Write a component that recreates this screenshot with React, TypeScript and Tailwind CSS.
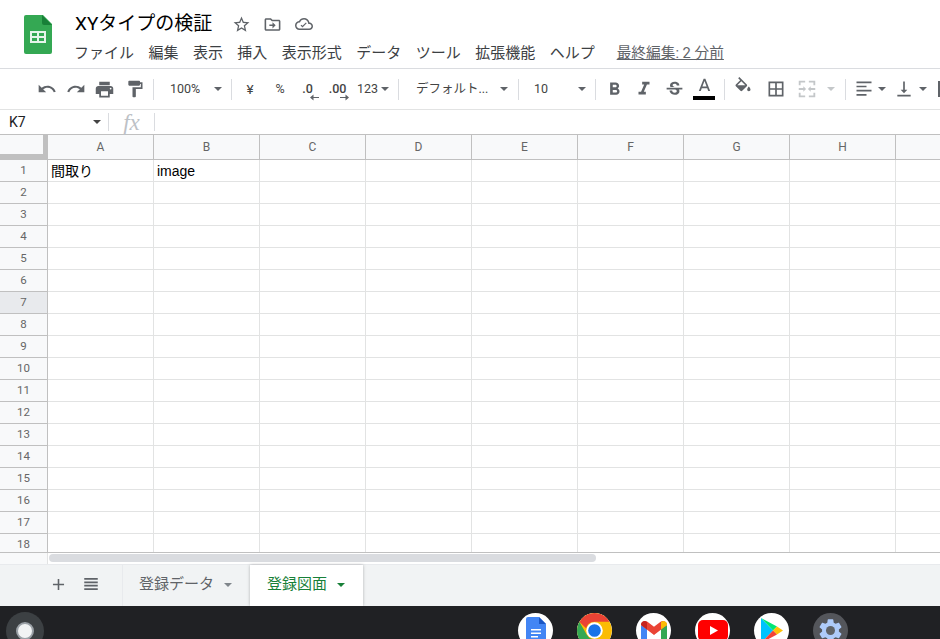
import React from 'react';

const FONT = "font-['Roboto','Noto_Sans_CJK_JP',sans-serif]";

const Icon: React.FC<{ d: string; size?: number; className?: string }> = ({ d, size = 18, className = 'text-[#5f6368]' }) => (
    <svg width={size} height={size} viewBox="0 0 24 24" fill="currentColor" fillRule="evenodd" className={className}>
        <path d={d} />
    </svg>
);

const Caret: React.FC<{ className?: string }> = ({ className = 'border-t-[#5f6368]' }) => (
    <span className={`inline-block shrink-0 w-0 h-0 border-x-[4px] border-x-transparent border-t-[4px] ${className}`} />
);

const Sep: React.FC = () => <div className="w-px h-[21px] bg-[#dadce0] shrink-0" />;

const Cell: React.FC<{ w: string; children?: React.ReactNode }> = ({ w, children }) => (
    <div className={`${w} h-full shrink-0 flex items-center justify-center`}>{children}</div>
);

const paths = {
    star: 'M22 9.24l-7.19-.62L12 2 9.19 8.63 2 9.24l5.46 4.73L5.82 21 12 17.27 18.18 21l-1.63-7.03L22 9.24zM12 15.4l-3.76 2.27 1-4.28-3.32-2.88 4.38-.38L12 6.1l1.71 4.04 4.38.38-3.32 2.88 1 4.28L12 15.4z',
    move: 'M20 6h-8l-2-2H4c-1.11 0-1.99.89-1.99 2L2 18c0 1.11.89 2 2 2h16c1.11 0 2-.89 2-2V8c0-1.11-.89-2-2-2zm0 12H4V6h5.17l2 2H20v10zm-8-1l4-4-4-4v3H8v2h4v3z',
    cloud: 'M19.35 10.04C18.67 6.59 15.64 4 12 4 9.11 4 6.6 5.64 5.35 8.04 2.34 8.36 0 10.91 0 14c0 3.31 2.69 6 6 6h13c2.76 0 5-2.24 5-5 0-2.64-2.05-4.78-4.65-4.96zM19 18H6c-2.21 0-4-1.79-4-4 0-2.05 1.53-3.76 3.56-3.97l1.07-.11.5-.95C8.08 7.14 9.94 6 12 6c2.62 0 4.88 1.86 5.39 4.43l.3 1.5 1.53.11c1.56.1 2.78 1.41 2.78 2.96 0 1.65-1.35 3-3 3zm-9-1.5l-2.6-2.6 1.06-1.06L10 14.38l4.54-4.54 1.06 1.06z',
    undo: 'M12.5 8c-2.65 0-5.05.99-6.9 2.6L2 7v9h9l-3.62-3.62c1.39-1.16 3.16-1.88 5.12-1.88 3.54 0 6.55 2.31 7.6 5.5l2.37-.78C21.08 11.03 17.15 8 12.5 8z',
    redo: 'M18.4 10.6C16.55 8.99 14.15 8 11.5 8c-4.65 0-8.58 3.03-9.96 7.22L3.9 16c1.05-3.19 4.05-5.5 7.6-5.5 1.95 0 3.73.72 5.12 1.88L13 16h9V7l-3.6 3.6z',
    print: 'M19 8H5c-1.66 0-3 1.34-3 3v6h4v4h12v-4h4v-6c0-1.66-1.34-3-3-3zm-3 11H8v-5h8v5zm3-7c-.55 0-1-.45-1-1s.45-1 1-1 1 .45 1 1-.45 1-1 1zm-1-9H6v4h12V3z',
    paint: 'M18 4V3c0-.55-.45-1-1-1H5c-.55 0-1 .45-1 1v4c0 .55.45 1 1 1h12c.55 0 1-.45 1-1V6h1v4H9v11c0 .55.45 1 1 1h2c.55 0 1-.45 1-1v-9h8V4h-3z',
    bold: 'M15.6 10.79c.97-.67 1.65-1.77 1.65-2.79 0-2.26-1.75-4-4-4H7v14h7.04c2.09 0 3.71-1.7 3.71-3.79 0-1.52-.86-2.82-2.15-3.42zM10 6.5h3c.83 0 1.5.67 1.5 1.5s-.67 1.5-1.5 1.5h-3v-3zm3.5 9H10v-3h3.5c.83 0 1.5.67 1.5 1.5s-.67 1.5-1.5 1.5z',
    italic: 'M10 4v3h2.21l-3.42 8H6v3h8v-3h-2.21l3.42-8H18V4z',
    strike: 'M6.85 7.08C6.85 4.37 9.45 3 12.24 3c1.64 0 3 .49 3.9 1.28.77.65 1.46 1.73 1.46 3.24h-3.01c0-.31-.05-.59-.15-.85-.29-.86-1.2-1.28-2.25-1.28-1.86 0-2.34 1.02-2.34 1.7 0 .48.25.88.74 1.21.38.25.77.48 1.41.7H7.39c-.21-.34-.54-.89-.54-1.92zM21 12v-2H3v2h9.62c1.15.45 1.96.75 1.96 1.97 0 1-.81 1.67-2.28 1.67-1.54 0-2.93-.54-2.93-2.51H6.4c0 .55.08 1.13.24 1.58.81 2.29 3.29 3.3 5.67 3.3 2.27 0 5.3-.89 5.3-4.05 0-.3-.01-1.16-.48-1.94H21V12z',
    textA: 'M11 3L5.5 17h2.25l1.12-3h6.25l1.12 3h2.25L13 3h-2zm-1.38 9L12 5.67 14.38 12H9.62z',
    fill: 'M16.56 8.94L7.62 0 6.21 1.41l2.38 2.38-5.15 5.15c-.59.59-.59 1.54 0 2.12l5.5 5.5c.29.29.68.44 1.06.44s.77-.15 1.06-.44l5.5-5.5c.59-.58.59-1.53 0-2.12zM5.21 10L10 5.21 14.79 10H5.21zM19 11.5s-2 2.17-2 3.5c0 1.1.9 2 2 2s2-.9 2-2c0-1.33-2-3.5-2-3.5z',
    borders: 'M3 3v18h18V3H3zm8 16H5v-6h6v6zm0-8H5V5h6v6zm8 8h-6v-6h6v6zm0-8h-6V5h6v6z',
    merge: 'M3 3h7v2H5v3H3V3zm11 0h7v5h-2V5h-5V3zM3 16h2v3h5v2H3v-5zm16 0h2v5h-7v-2h5v-3zM3 11h5V9l3 3-3 3v-2H3v-2zm18 2h-5v2l-3-3 3-3v2h5v2z',
    alignLeft: 'M3 3h18v2H3V3zm0 5h12v2H3V8zm0 5h18v2H3v-2zm0 5h12v2H3v-2z',
    valign: 'M16 13h-3V3h-2v10H8l4 4 4-4zM4 19v2h16v-2H4z',
    plus: 'M19 13h-6v6h-2v-6H5v-2h6V5h2v6h6v2z',
    list: 'M3 4h18v2.4H3V4zm0 4.5h18v2.4H3V8.500zm0 4.500h18v2.400H3V13zm0 4.500h18v2.400H3v-2.400z',
};

const menus = ['ファイル', '編集', '表示', '挿入', '表示形式', 'データ', 'ツール', '拡張機能', 'ヘルプ'];
const columns = ['A', 'B', 'C', 'D', 'E', 'F', 'G', 'H'];
const rows = Array.from({ length: 18 }, (_, i) => i + 1);

const SheetsLogo: React.FC = () => (
    <svg width="28" height="39" viewBox="0 0 28 39">
        <path d="M2 0h17l9 9v28a2 2 0 0 1-2 2H2a2 2 0 0 1-2-2V2a2 2 0 0 1 2-2z" fill="#34a853" />
        <path d="M18 0l10 10H20a2 2 0 0 1-2-2V0z" fill="#188038" />
        <path d="M6 16h16v12H6V16zm2 2v3h5v-3H8zm7 0v3h5v-3h-5zm-7 5v3h5v-3H8zm7 0v3h5v-3h-5z" fill="#e6f4ea" fillRule="evenodd" />
    </svg>
);

const Arrow: React.FC<{ right?: boolean; className: string }> = ({ right, className }) => (
    <svg width="9" height="7" viewBox="0 0 9 7" fill="#5f6368" className={`absolute ${className}`}>
        <path d={right ? 'M0 3h5.500V0.500L9 3.500 5.500 6.500V4H0z' : 'M9 3H3.500V0.500L0 3.500l3.500 3V4H9z'} />
    </svg>
);

const ShelfBadge: React.FC<{ children: React.ReactNode; dark?: boolean }> = ({ children, dark }) => (
    <div className={`w-[35px] h-[35px] rounded-full shrink-0 flex items-center justify-center overflow-hidden ${dark ? 'bg-[#54565b]' : 'bg-white'}`}>
        {children}
    </div>
);

const Shelf: React.FC = () => (
    <div className="h-[33px] bg-[#202124] flex items-start pt-[6px] pl-[6px] overflow-hidden shrink-0">
        <div className="w-[38px] h-[38px] rounded-full bg-[#3c4043] flex items-center justify-center shrink-0">
            <div className="w-[18px] h-[18px] rounded-full bg-[#f1f3f4] border-[2px] border-[#9aa0a6]" />
        </div>
        <div className="ml-[474px] flex gap-[24px] mt-[1px]">
            <ShelfBadge>
                <svg width="20" height="27" viewBox="0 0 20 27">
                    <path d="M2 0h11l7 7v18a2 2 0 0 1-2 2H2a2 2 0 0 1-2-2V2a2 2 0 0 1 2-2z" fill="#4285f4" />
                    <path d="M13 0l7 7h-7V0z" fill="#1a56c4" />
                    <path d="M5 12h10v1.500H5V12zm0 3.500h10V17H5v-1.500zm0 3.500h7v1.500H5V19z" fill="#fff" />
                </svg>
            </ShelfBadge>
            <ShelfBadge>
                <svg width="35" height="35" viewBox="0 0 36 36">
                    <circle cx="18" cy="18" r="18" fill="#fbbc04" />
                    <path d="M18 0a18 18 0 0 1 15.600 9H18a9 9 0 0 0-8.700 6.700L2.400 9A18 18 0 0 1 18 0z" fill="#ea4335" />
                    <path d="M2.400 9l7.800 13.500a9 9 0 0 0 7.800 4.500L14 36A18 18 0 0 1 2.400 9z" fill="#34a853" />
                    <circle cx="18" cy="18" r="8.500" fill="#fff" />
                    <circle cx="18" cy="18" r="6.500" fill="#1a73e8" />
                </svg>
            </ShelfBadge>
            <ShelfBadge>
                <svg width="28" height="24" viewBox="0 0 28 24">
                    <path d="M1 6v16a2 2 0 0 0 2 2h4V10z" fill="#4285f4" />
                    <path d="M27 6v16a2 2 0 0 1-2 2h-4V10z" fill="#34a853" />
                    <path d="M1 6a4 4 0 0 1 6.400-3.200L14 7.800l6.600-5A4 4 0 0 1 27 6l-13 10z" fill="#ea4335" />
                    <path d="M21 3l2-1a4 4 0 0 1 4 4l-6 4.600z" fill="#fbbc04" />
                    <path d="M1 6a4 4 0 0 1 4-4l2 1v7.600z" fill="#c5221f" />
                </svg>
            </ShelfBadge>
            <ShelfBadge>
                <svg width="30" height="21" viewBox="0 0 30 21">
                    <rect width="30" height="21" rx="5" fill="#ff0000" />
                    <path d="M12 6l8 4.500-8 4.500z" fill="#fff" />
                </svg>
            </ShelfBadge>
            <ShelfBadge>
                <svg width="24" height="27" viewBox="0 0 24 27">
                    <path d="M1 1v25l12-12.500z" fill="#00c3ff" />
                    <path d="M1 1l16 8.500-4 4z" fill="#00e676" />
                    <path d="M17 9.500l6 4-6 4-4-4z" fill="#ffc107" />
                    <path d="M1 26l12-12.500 4 4z" fill="#f44336" />
                </svg>
            </ShelfBadge>
            <ShelfBadge dark>
                <svg width="27" height="27" viewBox="0 0 24 24">
                    <path d="M19.430 12.980c.04-.32.07-.64.07-.98s-.03-.66-.07-.98l2.110-1.650c.19-.15.240-.42.120-.640l-2-3.460c-.12-.22-.39-.3-.61-.22l-2.490 1c-.52-.4-1.080-.73-1.690-.98l-.38-2.650A.488.488 0 0 0 14 2h-4c-.25 0-.46.18-.49.42l-.38 2.650c-.61.25-1.170.59-1.690.98l-2.490-1c-.23-.09-.49 0-.61.22l-2 3.460c-.13.22-.07.49.12.640l2.110 1.650c-.04.32-.07.65-.07.98s.03.66.07.98l-2.110 1.650c-.19.15-.24.42-.12.640l2 3.460c.12.22.39.3.61.22l2.490-1c.52.4 1.080.73 1.690.98l.38 2.650c.03.24.24.42.49.42h4c.25 0 .46-.18.49-.42l.38-2.650c.61-.25 1.170-.59 1.690-.98l2.490 1c.23.09.49 0 .61-.22l2-3.460c.12-.22.07-.49-.12-.640z" fill="#aecbfa" />
                    <circle cx="12" cy="12" r="4" fill="#5f6368" />
                </svg>
            </ShelfBadge>
        </div>
    </div>
);

const App: React.FC = () => {
    return (
        <div className={`w-[940px] h-[639px] flex flex-col overflow-hidden bg-white ${FONT}`}>
            {/* title and menu */}
            <div className="h-[69px] shrink-0 flex border-b border-[#dadce0]">
                <div className="w-[75px] shrink-0 pl-[24px] pt-[15px]">
                    <SheetsLogo />
                </div>
                <div className="flex flex-col">
                    <div className="flex items-center h-[24px] mt-[12px]">
                        <span className="text-[19px] leading-[24px] text-black">XYタイプの検証</span>
                        <div className="flex items-center ml-[20px] gap-[12px]">
                            <Icon d={paths.star} size={19} />
                            <Icon d={paths.move} size={19} />
                            <Icon d={paths.cloud} size={18} className="text-[#5f6368] ml-[1px]" />
                        </div>
                    </div>
                    <div className="flex items-center h-[18px] mt-[8px] -ml-[1px] text-[15px] text-[#3c4043] whitespace-nowrap">
                        <div className="flex gap-[14.450px]">
                            {menus.map(m => (
                                <span key={m}>{m}</span>
                            ))}
                        </div>
                        <span className="ml-[22px] text-[14.700px] text-[#5f6368] underline">最終編集: 2 分前</span>
                    </div>
                </div>
            </div>

            {/* toolbar */}
            <div className="h-[41px] shrink-0 flex items-center pl-[32px] border-b border-[#e2e3e3] overflow-hidden text-[12.500px] text-[#444]">
                <Cell w="w-[29px]"><Icon d={paths.undo} size={20} /></Cell>
                <Cell w="w-[29px]"><Icon d={paths.redo} size={20} /></Cell>
                <Cell w="w-[29px]"><Icon d={paths.print} size={21} /></Cell>
                <Cell w="w-[32px]"><Icon d={paths.paint} size={20} /></Cell>
                <div className="w-[2px] shrink-0" />
                <Sep />
                <div className="w-[77px] h-full shrink-0 flex items-center pl-[16px]">
                    <span className="w-[44px]">100%</span>
                    <Caret />
                </div>
                <Sep />
                <Cell w="w-[36px]"><span className="text-[13.500px]">¥</span></Cell>
                <Cell w="w-[24px]"><span>%</span></Cell>
                <Cell w="w-[31px]">
                    <div className="relative font-medium leading-none">
                        .0
                        <Arrow className="left-[8px] top-[11px]" />
                    </div>
                </Cell>
                <Cell w="w-[29px]">
                    <div className="relative font-medium leading-none">
                        .00
                        <Arrow right className="right-[-3px] top-[11px]" />
                    </div>
                </Cell>
                <div className="w-[46px] h-full shrink-0 flex items-center pl-[5px]">
                    <span>123</span>
                    <Caret className="border-t-[#5f6368] ml-[3px]" />
                </div>
                <Sep />
                <div className="w-[119px] h-full shrink-0 flex items-center pl-[17px]">
                    <span className="w-[84px] whitespace-nowrap">デフォルト...</span>
                    <Caret />
                </div>
                <Sep />
                <div className="w-[76px] h-full shrink-0 flex items-center pl-[15px]">
                    <span className="w-[44px]">10</span>
                    <Caret />
                </div>
                <Sep />
                <div className="w-[3px] shrink-0" />
                <Cell w="w-[30px]"><Icon d={paths.bold} size={21} /></Cell>
                <Cell w="w-[30px]"><Icon d={paths.italic} size={22} /></Cell>
                <Cell w="w-[30px]"><Icon d={paths.strike} size={21} /></Cell>
                <Cell w="w-[30px]">
                    <div className="flex flex-col items-center -mt-[3px]">
                        <Icon d={paths.textA} size={21} />
                        <div className="w-[22px] h-[4px] bg-black -mt-[1px]" />
                    </div>
                </Cell>
                <div className="w-[5px] shrink-0" />
                <Sep />
                <Cell w="w-[35px]"><div className="-mt-[5px]"><Icon d={paths.fill} size={20} /></div></Cell>
                <Cell w="w-[32px]"><Icon d={paths.borders} size={20} /></Cell>
                <Cell w="w-[30px]"><Icon d={paths.merge} size={22} className="text-[#c4c7c9]" /></Cell>
                <Cell w="w-[18px]"><Caret className="border-t-[#c4c7c9]" /></Cell>
                <div className="w-[5px] shrink-0" />
                <Sep />
                <div className="w-[41px] h-full shrink-0 flex items-center pl-[8px] gap-[4px]">
                    <Icon d={paths.alignLeft} size={20} />
                    <Caret />
                </div>
                <div className="w-[44px] h-full shrink-0 flex items-center pl-[7px] gap-[5px]">
                    <Icon d={paths.valign} size={20} />
                    <Caret />
                </div>
                <div className="w-[3px] h-[16px] bg-[#5f6368] shrink-0 ml-[7px]" />
            </div>

            {/* formula bar */}
            <div className="h-[25px] shrink-0 flex items-center border-b border-[#c0c0c0]">
                <div className="w-[108px] flex items-center pl-[9px] pr-[7px] justify-between">
                    <span className="text-[14px] text-[#202124]">K7</span>
                    <Caret className="border-t-[#444]" />
                </div>
                <div className="w-px h-[18px] bg-[#dadce0]" />
                <div className="w-[45px] text-center font-['Liberation_Serif',serif] italic text-[23px] leading-none text-[#bdc1c6]">fx</div>
                <div className="w-px h-[18px] bg-[#dadce0]" />
            </div>

            {/* column headers */}
            <div className="h-[25px] shrink-0 flex bg-[#f8f9fa] border-b border-[#c0c0c0] text-[12px] text-[#666]">
                <div className="w-[48px] shrink-0 h-[24px] border-r-[5px] border-b-[5px] border-[#c0c0c0] -mb-px" />
                {columns.map(c => (
                    <div key={c} className="w-[106px] shrink-0 flex items-center justify-center border-r border-[#c0c0c0]">{c}</div>
                ))}
                <div className="flex-1" />
            </div>

            {/* cells */}
            <div className="h-[392px] shrink-0 overflow-hidden">
                {rows.map(r => (
                    <div key={r} className="h-[22px] flex">
                        <div className={`w-[48px] shrink-0 flex items-center justify-center text-[11.500px] text-[#666] border-r border-b border-[#c0c0c0] ${r === 7 ? 'bg-[#e8eaed]' : 'bg-[#f8f9fa]'}`}>{r}</div>
                        {columns.map(c => (
                            <div key={c} className="w-[106px] shrink-0 border-r border-b border-[#e2e3e3] pl-[3px] pt-[1px] flex items-center text-[14px] text-black font-['Liberation_Sans','Noto_Sans_CJK_JP',sans-serif] overflow-hidden whitespace-nowrap">
                                {r === 1 && c === 'A' && '間取り'}
                                {r === 1 && c === 'B' && 'image'}
                            </div>
                        ))}
                        <div className="flex-1 border-b border-[#e2e3e3]" />
                    </div>
                ))}
            </div>

            {/* horizontal scrollbar */}
            <div className="h-[12px] shrink-0 flex border-t border-[#c0c0c0]">
                <div className="w-[48px] shrink-0 bg-[#f8f9fa] border-r border-[#e2e3e3]" />
                <div className="flex-1 bg-white pl-px pt-[1px]">
                    <div className="w-[547px] h-[8px] rounded-full bg-[#dadce0]" />
                </div>
            </div>

            {/* sheet tabs */}
            <div className="h-[42px] shrink-0 flex bg-[#f1f3f4] border-t border-[#e8eaed]">
                <div className="w-[122px] shrink-0 flex items-center pl-[49px] pb-[3px] gap-[15px]">
                    <Icon d={paths.plus} size={19} />
                    <Icon d={paths.list} size={18} className="text-[#5f6368] -ml-[1px]" />
                </div>
                <div className="w-[128px] shrink-0 flex items-center pl-[16px] pb-[2px] gap-[10px] border-l border-[#e8eaed] text-[15px] text-[#5f6368]">
                    <span>登録データ</span>
                    <Caret className="border-t-[#80868b]" />
                </div>
                <div className="w-[113px] shrink-0 flex items-center pl-[17px] pb-[2px] gap-[10px] bg-white shadow-[0_0_3px_rgba(60,64,67,0.35)] text-[15px] text-[#188038]">
                    <span>登録図面</span>
                    <Caret className="border-t-[#188038]" />
                </div>
            </div>

            <Shelf />
        </div>
    );
};

export default App;
